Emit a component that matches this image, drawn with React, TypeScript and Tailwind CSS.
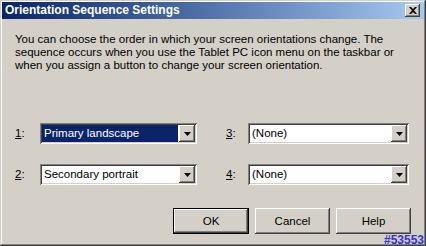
import type { ReactNode } from "react";

const raised =
  "bg-[#d4d0c8] shadow-[inset_-1px_-1px_#404040,inset_1px_1px_#ffffff,inset_-2px_-2px_#808080,inset_2px_2px_#d4d0c8]";
const sunken =
  "shadow-[inset_1px_1px_#808080,inset_-1px_-1px_#ffffff,inset_2px_2px_#404040,inset_-2px_-2px_#d4d0c8]";

function Arrow() {
  return (
    <svg width="7" height="4" viewBox="0 0 7 4">
      <path d="M0 0h7L3.5 4z" fill="#000" />
    </svg>
  );
}

function Combo({ value, selected }: { value: string; selected?: boolean }) {
  return (
    <div className={`flex h-[21px] bg-white p-[2px] ${sunken}`}>
      <div className="flex flex-1 items-center pr-[1px]">
        <span
          className={`flex h-full flex-1 items-center pl-[2px] ${selected ? "bg-[#0a246a] text-white" : "text-black"}`}
        >
          {value}
        </span>
      </div>
      <div className={`flex w-[16px] items-center justify-center ${raised}`}>
        <Arrow />
      </div>
    </div>
  );
}

function Row({ n, wide, children }: { n: string; wide?: boolean; children: ReactNode }) {
  return (
    <div className="flex items-center">
      <span className={`${wide ? "w-[25px]" : "w-[22px]"} text-black`}>
        <span className="underline">{n}</span>:
      </span>
      {children}
    </div>
  );
}

function Btn({ label, def }: { label: string; def?: boolean }) {
  return (
    <div className={def ? "border border-black" : ""}>
      <div
        className={`flex items-center justify-center text-black ${raised} ${def ? "h-[24px] w-[74px]" : "h-[26px] w-[75px]"}`}
      >
        {label}
      </div>
    </div>
  );
}

export default function App() {
  return (
    <div
      className="relative h-[246px] w-[426px] bg-[#d4d0c8] p-[2px] text-[11.5px] leading-[13px] shadow-[inset_-1px_-1px_#404040,inset_1px_1px_#d4d0c8,inset_-2px_-2px_#808080,inset_2px_2px_#ffffff]"
      style={{ fontFamily: '"Liberation Sans", Arial, sans-serif' }}
    >
      <div className="flex h-[17px] items-center justify-between bg-gradient-to-r from-[#0a246a] to-[#a6caf0] pl-[3px] pr-[4px]">
        <span className="text-[12px] font-bold text-white">Orientation Sequence Settings</span>
        <div className={`flex h-[13px] w-[15px] items-center justify-center ${raised}`}>
          <svg width="8" height="7" viewBox="0 0 8 7">
            <path d="M0 0h2l2 2 2-2h2L5 3.5 8 7H6L4 5 2 7H0l3-3.5z" fill="#000" />
          </svg>
        </div>
      </div>

      <div className="flex flex-col px-[13px] pt-[14px]">
        <p className="text-black">
          You can choose the order in which your screen orientations change. The
          <br />
          sequence occurs when you use the Tablet PC icon menu on the taskbar or
          <br />
          when you assign a button to change your screen orientation.
        </p>

        <div className="mt-[51px] grid grid-cols-[182px_183px] gap-x-[29px] gap-y-[20px]">
          <Row n="1" wide>
            <div className="w-[157px]">
              <Combo value="Primary landscape" selected />
            </div>
          </Row>
          <Row n="3">
            <div className="w-[161px]">
              <Combo value="(None)" />
            </div>
          </Row>
          <Row n="2" wide>
            <div className="w-[157px]">
              <Combo value="Secondary portrait" />
            </div>
          </Row>
          <Row n="4">
            <div className="w-[161px]">
              <Combo value="(None)" />
            </div>
          </Row>
        </div>

        <div className="mt-[23px] flex justify-end gap-[6px]">
          <Btn label="OK" def />
          <Btn label="Cancel" />
          <Btn label="Help" />
        </div>
      </div>

      <span className="absolute bottom-[0px] right-[2px] text-[12px] font-bold leading-[12px] text-[#3333cc]">
        #53553
      </span>
    </div>
  );
}
